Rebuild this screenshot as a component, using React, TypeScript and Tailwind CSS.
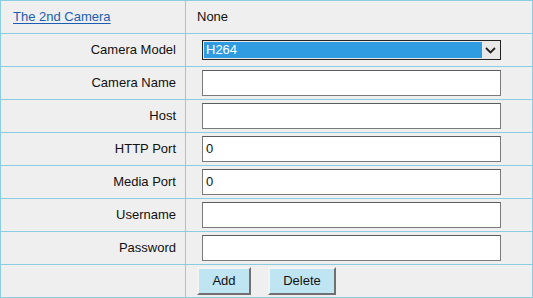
const rows = [
  { label: 'Camera Name', value: '' },
  { label: 'Host', value: '' },
  { label: 'HTTP Port', value: '0' },
  { label: 'Media Port', value: '0' },
  { label: 'Username', value: '' },
  { label: 'Password', value: '' },
];

const labelCell = 'h-[32px] bg-[#efefef] flex items-center justify-end pr-[9px] text-[13px] text-[#111]';
const valueCell = 'h-[32px] bg-[#efefef] flex items-center pl-[16px]';
const btn =
  'h-[28px] bg-[#bfe5f3] border-2 border-t-[#f4f4f4] border-l-[#f4f4f4] border-b-[#707070] border-r-[#707070] text-[13px] text-[#111]';

const App = () => {
  return (
    <div className="w-[533px] h-[298px] bg-white" style={{ fontFamily: '"Liberation Sans", Arial, sans-serif' }}>
      <div className="grid grid-cols-[184px_346px] gap-px p-px bg-[#8acde0]">
        <div className="h-[32px] bg-[#efefef] flex items-center pl-[12px]">
          <a href="#" className="text-[13px] text-[#1a5db5] underline underline-offset-2">
            The 2nd Camera
          </a>
        </div>
        <div className="h-[32px] bg-[#efefef] flex items-center pl-[11px] text-[13px] text-[#111]">None</div>

        <div className={labelCell}>Camera Model</div>
        <div className={valueCell}>
          <div className="w-[299px] h-[20px] border border-[#222] bg-[#e8e8e8] flex items-stretch p-px">
            <div className="flex-1 bg-[#2f9be0] text-white text-[13px] leading-[16px] pl-[2px]">H264</div>
            <div className="w-[17px] flex items-center justify-center">
              <svg width="11" height="7" viewBox="0 0 11 7">
                <path d="M1 1 L5.5 5.5 L10 1" fill="none" stroke="#222" strokeWidth="1.8" />
              </svg>
            </div>
          </div>
        </div>

        {rows.map((r) => (
          <div key={r.label} className="contents">
            <div className={labelCell}>{r.label}</div>
            <div className={valueCell}>
              <div className="w-[299px] h-[26px] bg-white border border-[#7a7a7a] border-t-[#5c5c5c] flex items-center pl-[3px] text-[13px] text-[#111]">
                {r.value}
              </div>
            </div>
          </div>
        ))}

        <div className="h-[32px] bg-[#efefef]" />
        <div className="h-[32px] bg-[#efefef] flex items-center pl-[11px] gap-[17px]">
          <button className={`w-[54px] ${btn}`}>Add</button>
          <button className={`w-[68px] ${btn}`}>Delete</button>
        </div>
      </div>
    </div>
  );
};

export default App;
